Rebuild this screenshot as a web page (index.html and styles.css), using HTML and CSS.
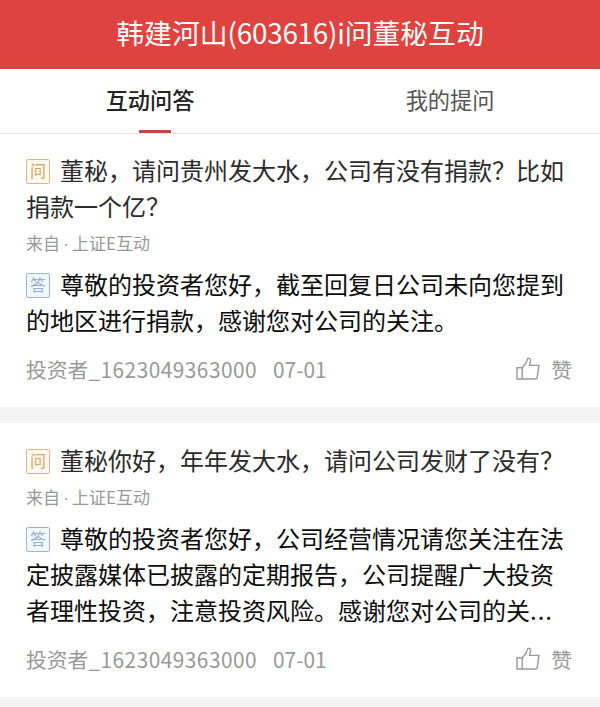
FILE: index.html
```html
<!DOCTYPE html>
<html lang="zh-CN">

<head>
  <meta charset="UTF-8" />
  <title>韩建河山(603616)i问董秘互动</title>
  <link rel="stylesheet" href="styles.css">
</head>

<body>
  <h1 class="header">韩建河山<span class="code">(603616)i</span>问董秘互动</h1>

  <nav class="tabs">
    <div class="tab active">互动问答</div>
    <div class="tab">我的提问</div>
  </nav>

  <div class="list">
    <div class="card">
      <div class="question"><span class="badge ask">问</span>董秘，请问贵州发大水，公司有没有捐款？比如捐款一个亿？</div>
      <div class="source">来自<span class="dot">·</span>上证E互动</div>
      <div class="answer"><span class="badge reply">答</span>尊敬的投资者您好，截至回复日公司未向您提到的地区进行捐款，感谢您对公司的关注。</div>
      <div class="meta">
        <span class="user">投资者<span class="num">_1623049363000</span></span>
        <span class="date">07-01</span>
        <div class="like">
          <svg width="24" height="24" viewBox="0 0 24 24">
            <path d="M1 10.8H6.2V22H1ZM6.2 10.8L10 6.2L11.6 1.6C12.6 .9 14.8 1.6 14.6 3.4L13.6 8.4H22.9L21.2 20.8C21 21.6 20.6 22 19.8 22H6.2" />
          </svg>
          <span>赞</span>
        </div>
      </div>
    </div>

    <div class="card">
      <div class="question"><span class="badge ask">问</span>董秘你好，年年发大水，请问公司发财了没有？</div>
      <div class="source">来自<span class="dot">·</span>上证E互动</div>
      <div class="answer"><span class="badge reply">答</span>尊敬的投资者您好，公司经营情况请您关注在法定披露媒体已披露的定期报告，公司提醒广大投资者理性投资，注意投资风险。感谢您对公司的关<span class="more">...</span></div>
      <div class="meta">
        <span class="user">投资者<span class="num">_1623049363000</span></span>
        <span class="date">07-01</span>
        <div class="like">
          <svg width="24" height="24" viewBox="0 0 24 24">
            <path d="M1 10.8H6.2V22H1ZM6.2 10.8L10 6.2L11.6 1.6C12.6 .9 14.8 1.6 14.6 3.4L13.6 8.4H22.9L21.2 20.8C21 21.6 20.6 22 19.8 22H6.2" />
          </svg>
          <span>赞</span>
        </div>
      </div>
    </div>
  </div>
</body>

</html>
```
FILE: styles.css
```css
* {
  box-sizing: border-box;
}

body {
  margin: 0;
  height: 707px;
  overflow: hidden;
  font-family: 'Noto Sans CJK SC', sans-serif;
  background: #f4f4f4;
}

.header {
  margin: 0;
  height: 69px;
  line-height: 65px;
  background: #de433f;
  color: #fff;
  font-size: 27.8px;
  font-weight: 400;
  text-align: center;
}

.code {
  letter-spacing: -0.2px;
}

.tabs {
  display: flex;
  height: 65px;
  background: #fff;
  border-bottom: 1px solid #e9e9e9;
}

.tab {
  flex: 1;
  display: flex;
  flex-direction: column;
  align-items: center;
  justify-content: space-between;
  line-height: 61px;
  font-size: 22.2px;
  color: #555;
}

.tab.active {
  color: #222;
  font-weight: 500;
}

.tab.active::after {
  content: '';
  width: 32px;
  height: 3px;
  margin-left: 9px;
  background: #c04a43;
}

.list {
  display: flex;
  flex-direction: column;
  gap: 16px;
}

.card {
  padding: 18px 26px 20px;
  background: #fff;
}

.card + .card {
  padding-top: 19px;
}

.question,
.answer {
  font-size: 24px;
  line-height: 36px;
  color: #2b2b2b;
}

.answer {
  margin-top: 5px;
  color: #0c0c0c;
}

.badge {
  display: inline-block;
  width: 24px;
  height: 25px;
  margin-right: 10px;
  border: 1px solid;
  border-radius: 2px;
  font-size: 16px;
  line-height: 21px;
  text-align: center;
  vertical-align: 3px;
}

.ask {
  color: #d9a45c;
  border-color: #dbb98a;
  background: #fffaf0;
}

.reply {
  color: #91acd0;
  border-color: #9db5d0;
  background: #eff7ff;
}

.more {
  letter-spacing: 1px;
}

.source {
  height: 36px;
  margin-top: 1px;
  font-size: 17px;
  line-height: 36px;
  color: #999;
}

.dot {
  display: inline-block;
  width: 12px;
  font-family: 'Liberation Sans', sans-serif;
  line-height: 20px;
  text-align: center;
}

.meta {
  display: flex;
  align-items: center;
  height: 36px;
  margin-top: 13px;
  font-size: 20.8px;
  color: #999;
}

.num {
  letter-spacing: 0.5px;
}

.date {
  margin-left: 16px;
}

.like {
  display: flex;
  align-items: center;
  gap: 11px;
  margin-left: auto;
  margin-right: 2px;
}

.like svg {
  fill: none;
  stroke: #999;
  stroke-width: 1.4;
}
```
